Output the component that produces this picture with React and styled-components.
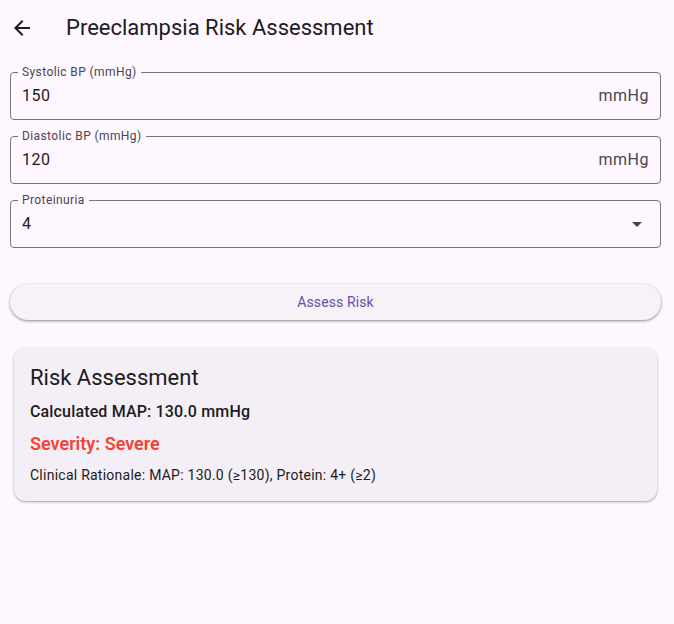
import React from 'react'
import styled, { createGlobalStyle } from 'styled-components'

const Global = createGlobalStyle`
  html, body {
    margin: 0;
    background: #fef7ff;
    font-family: Roboto, "Noto Sans", sans-serif;
    color: #1d1b20;
  }
`

const Page = styled.div`
  min-height: 624px;
  background: #fef7ff;
`

const AppBar = styled.header`
  display: flex;
  align-items: center;
  height: 56px;
  padding-left: 10px;
`

const BackButton = styled.button`
  display: flex;
  align-items: center;
  justify-content: center;
  width: 24px;
  height: 24px;
  padding: 0;
  border: none;
  background: none;
  color: #1d1b20;
  margin-right: 32px;
`

const Title = styled.h1`
  margin: 0;
  font-size: 22px;
  font-weight: 400;
  line-height: 28px;
  color: #1d1b20;
`

const Body = styled.main`
  display: flex;
  flex-direction: column;
  padding: 16px 13px 0 10px;
`

const Field = styled.div`
  position: relative;
  display: flex;
  align-items: center;
  height: 46px;
  padding: 0 11px;
  border: 1px solid #79747e;
  border-radius: 4px;
  margin-bottom: ${p => p.$gap || 16}px;
`

const FieldLabel = styled.span`
  position: absolute;
  top: -9px;
  left: 7px;
  padding: 0 4px;
  font-size: 12px;
  line-height: 16px;
  letter-spacing: 0.4px;
  color: #49454f;
  background: #fef7ff;
`

const Value = styled.span`
  flex: 1;
  font-size: 16px;
  line-height: 24px;
  letter-spacing: 0.5px;
  color: #1d1b20;
`

const Suffix = styled.span`
  font-size: 16px;
  line-height: 24px;
  letter-spacing: 0.5px;
  color: #49454f;
`

const DropIcon = styled.svg`
  width: 24px;
  height: 24px;
  fill: #49454f;
`

const AssessButton = styled.button`
  height: 36px;
  border: none;
  border-radius: 18px;
  background: #f6f2f8;
  color: #6750a4;
  font-family: Roboto, sans-serif;
  font-size: 14px;
  font-weight: 400;
  letter-spacing: 0.1px;
  box-shadow: 0 1px 2px rgba(0, 0, 0, 0.3), 0 1px 3px 1px rgba(0, 0, 0, 0.12);
  margin-bottom: 28px;
`

const Card = styled.section`
  margin: 0 4px;
  padding: 16px;
  border-radius: 12px;
  background: #f4eff6;
  box-shadow: 0 1px 2px rgba(0, 0, 0, 0.25), 0 1px 3px 1px rgba(0, 0, 0, 0.08);
`

const CardTitle = styled.h2`
  margin: 0;
  font-size: 22px;
  font-weight: 400;
  line-height: 28px;
  color: #1d1b20;
`

const Line = styled.p`
  margin: ${p => p.$top}px 0 0;
  font-size: ${p => p.$size}px;
  line-height: ${p => p.$lh}px;
  letter-spacing: ${p => p.$ls || 0}px;
  font-weight: ${p => p.$weight || 400};
  color: ${p => p.$color || '#1d1b20'};
`

function OutlinedField({ label, value, suffix, select, gap }) {
  return (
    <Field $gap={gap}>
      <FieldLabel>{label}</FieldLabel>
      <Value>{value}</Value>
      {suffix && <Suffix>{suffix}</Suffix>}
      {select && (
        <DropIcon viewBox="0 0 24 24">
          <path d="M7 10l5 5 5-5z" />
        </DropIcon>
      )}
    </Field>
  )
}

export default function App() {
  return (
    <Page>
      <Global />
      <AppBar>
        <BackButton aria-label="Back">
          <svg width="24" height="24" viewBox="0 0 24 24" fill="currentColor">
            <path d="M20 11H7.83l5.59-5.59L12 4l-8 8 8 8 1.41-1.41L7.83 13H20v-2z" />
          </svg>
        </BackButton>
        <Title>Preeclampsia Risk Assessment</Title>
      </AppBar>
      <Body>
        <OutlinedField label="Systolic BP (mmHg)" value="150" suffix="mmHg" />
        <OutlinedField label="Diastolic BP (mmHg)" value="120" suffix="mmHg" />
        <OutlinedField label="Proteinuria" value="4" select gap={36} />
        <AssessButton>Assess Risk</AssessButton>
        <Card>
          <CardTitle>Risk Assessment</CardTitle>
          <Line $top={10} $size={16} $lh={20} $weight={500} $ls={0.15}>Calculated MAP: 130.0 mmHg</Line>
          <Line $top={10} $size={18} $lh={24} $weight={600} $color="#f44336">Severity: Severe</Line>
          <Line $top={9} $size={14} $lh={20} $ls={0.25}>Clinical Rationale: MAP: 130.0 (≥130), Protein: 4+ (≥2)</Line>
        </Card>
      </Body>
    </Page>
  )
}
